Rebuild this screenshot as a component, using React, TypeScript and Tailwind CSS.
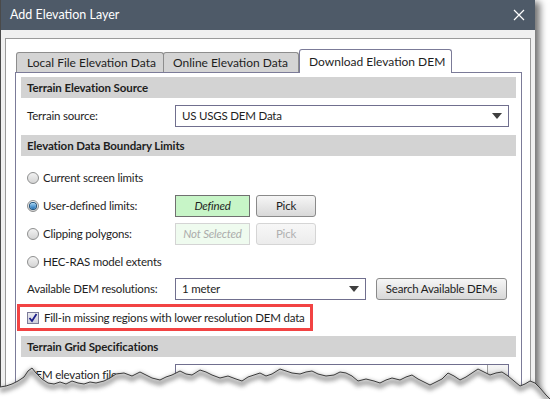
import React from 'react';

const font = { fontFamily: 'Lato, "Noto Sans", sans-serif' };

function Radio({ checked }: { checked?: boolean }) {
  return (
    <span className="relative inline-flex h-[12px] w-[12px] shrink-0 items-center justify-center rounded-full border border-[#8e8f8f] bg-gradient-to-b from-[#f2f2f2] to-[#d4d4d4]">
      {checked && (
        <span className="h-[6px] w-[6px] rounded-full bg-gradient-to-b from-[#9fd4f5] to-[#1a6fb5] ring-1 ring-[#1c4f7a]" />
      )}
    </span>
  );
}

function DropArrow() {
  return (
    <svg width="10" height="6" viewBox="0 0 10 6" className="shrink-0">
      <path d="M0 0 L10 0 L5 6 Z" fill="#3f3f3f" />
    </svg>
  );
}

function Header({ children }: { children: React.ReactNode }) {
  return (
    <div className="flex h-[21px] items-center bg-[#d3d3d3] pl-[6px] text-[11.5px] font-bold tracking-[-0.1px] text-[#1e1e1e]">
      {children}
    </div>
  );
}

function Button({ children, disabled, className = '' }: { children: React.ReactNode; disabled?: boolean; className?: string }) {
  return (
    <div
      className={
        'flex h-[22px] items-center justify-center rounded-[3px] border text-[11.5px] ' +
        (disabled
          ? 'border-[#d5d5d5] bg-gradient-to-b from-[#f7f7f7] to-[#ececec] text-[#b0b0b0] '
          : 'border-[#8a8a8a] bg-gradient-to-b from-[#f6f6f6] to-[#d8d8d8] text-[#1e1e1e] ') +
        className
      }
    >
      {children}
    </div>
  );
}

// torn paper edge at the bottom of the screenshot
const edge: [number, number][] = [
  [0, 387], [6, 386], [12, 384], [18, 381], [24, 377], [28, 371], [32, 368], [36, 373], [42, 379],
  [48, 383], [54, 384], [60, 382], [66, 384], [72, 381], [78, 383], [84, 384], [90, 382], [96, 383],
  [104, 381], [110, 378], [116, 374], [124, 373], [132, 376], [140, 372], [146, 375], [152, 378],
  [160, 380], [166, 377], [172, 375], [180, 371], [186, 374], [192, 375], [200, 370], [206, 372],
  [212, 375], [220, 378], [228, 376], [236, 379], [242, 381], [248, 377], [254, 375], [260, 373],
  [266, 376], [272, 374], [280, 369], [286, 371], [292, 373], [300, 374], [306, 372], [312, 371],
  [318, 374], [326, 376], [334, 375], [340, 372], [346, 373], [352, 376], [358, 381], [366, 379],
  [374, 381], [380, 383], [386, 380], [392, 378], [400, 380], [406, 377], [412, 375], [418, 379],
  [424, 382], [430, 385], [436, 382], [442, 379], [448, 373], [454, 376], [460, 380], [466, 377],
  [472, 373], [478, 369], [484, 372], [490, 375], [496, 373], [502, 372], [508, 376], [514, 381],
  [520, 386], [525, 384], [530, 381], [535, 383], [540, 388], [546, 395], [550, 399],
];
const edgeLine = edge.map((p, i) => (i === 0 ? 'M' : 'L') + p[0] + ' ' + p[1]).join(' ');
const edgeFill = edgeLine + ' L550 399 L0 399 Z';
const shadowLine = edge.map((p, i) => (i === 0 ? 'M' : 'L') + p[0] + ' ' + (p[1] + 3)).join(' ');

export default function App() {
  return (
    <div className="relative h-[399px] w-[550px] overflow-hidden bg-white" style={font}>
      {/* window */}
      <div className="flex h-[420px] w-[535px] flex-col border-l border-[#4a4a4a] shadow-[5px_2px_7px_rgba(0,0,0,0.55)]">
        {/* title bar */}
        <div className="flex h-[30px] shrink-0 items-center justify-between bg-[#4e5a68] pl-[9px] pr-[10px] text-white">
          <span className="text-[12.5px]">Add Elevation Layer</span>
          <svg width="12" height="12" viewBox="0 0 12 12">
            <path d="M1 1 L11 11 M11 1 L1 11" stroke="#ffffff" strokeWidth="1.2" />
          </svg>
        </div>

        {/* body */}
        <div className="flex flex-1 flex-col bg-[#f0f0f0] pl-[4px] pr-[4px] pt-[8px]">
          <div className="flex flex-1 flex-col border border-[#9a9a9a] bg-white pl-[9px] pr-[8px] pt-[10px]">
            {/* tabs */}
            <div className="relative z-10 flex h-[23px] items-end pl-[1px] text-[12px] text-[#1e1e1e]">
              <div className="flex h-[20px] w-[148px] items-center whitespace-nowrap rounded-t-[3px] border border-b-0 border-[#8d8d8d] bg-[#d4d4d4] pl-[10px]">
                Local File Elevation Data
              </div>
              <div className="-ml-px flex h-[20px] w-[136px] items-center whitespace-nowrap rounded-t-[3px] border border-b-0 border-[#8d8d8d] bg-[#d4d4d4] pl-[9px]">
                Online Elevation Data
              </div>
              <div className="-mb-px flex h-[24px] w-[153px] items-center whitespace-nowrap rounded-t-[3px] border border-b-0 border-[#7b7b98] bg-white pl-[9px]">
                Download Elevation DEM
              </div>
            </div>

            {/* tab content */}
            <div className="flex flex-1 flex-col border border-[#7b7b98] px-[5px] text-[11.5px] tracking-[-0.2px] text-[#1e1e1e]">
              <div className="mt-[4px]">
                <Header>Terrain Elevation Source</Header>
              </div>

              <div className="mt-[7px] flex h-[22px] items-center">
                <span className="w-[154px] whitespace-nowrap pl-[6px]">Terrain source:</span>
                <div className="flex h-[22px] w-[334px] items-center justify-between border border-[#706f8e] pl-[6px] pr-[6px]">
                  <span>US USGS DEM Data</span>
                  <DropArrow />
                </div>
              </div>

              <div className="mt-[8px]">
                <Header>Elevation Data Boundary Limits</Header>
              </div>

              <div className="mt-[8px] flex h-[28px] items-center pl-[6px]">
                <Radio />
                <span className="ml-[4px]">Current screen limits</span>
              </div>
              <div className="flex h-[28px] items-center pl-[6px]">
                <Radio checked />
                <span className="ml-[4px] w-[132px]">User-defined limits:</span>
                <div className="flex h-[22px] w-[75px] items-center justify-center border border-[#707070] bg-[#c7f5c7] italic">
                  Defined
                </div>
                <Button className="ml-[6px] w-[60px]">Pick</Button>
              </div>
              <div className="flex h-[28px] items-center pl-[6px]">
                <Radio />
                <span className="ml-[4px] w-[132px]">Clipping polygons:</span>
                <div className="flex h-[22px] w-[75px] items-center justify-center whitespace-nowrap border border-[#d4d4d4] bg-[#effbef] italic text-[#ababab]">
                  Not Selected
                </div>
                <Button disabled className="ml-[6px] w-[60px]">Pick</Button>
              </div>
              <div className="flex h-[28px] items-center pl-[6px]">
                <Radio />
                <span className="ml-[4px]">HEC-RAS model extents</span>
              </div>

              <div className="mt-[2px] flex h-[22px] items-center">
                <span className="w-[154px] whitespace-nowrap pl-[6px]">Available DEM resolutions:</span>
                <div className="flex h-[22px] w-[191px] items-center justify-between border border-[#706f8e] pl-[6px] pr-[6px]">
                  <span>1 meter</span>
                  <DropArrow />
                </div>
                <Button className="ml-[10px] w-[131px] whitespace-nowrap">Search Available DEMs</Button>
              </div>

              <div className="ml-[-4px] mt-[4px] flex h-[27px] w-[296px] items-center border-[3px] border-[#f24343] pl-[7px]">
                <span className="flex h-[12px] w-[12px] shrink-0 items-center justify-center border border-[#7c7c99] bg-gradient-to-b from-[#eaeaf0] to-[#cfd0dc]">
                  <svg width="10" height="10" viewBox="0 0 10 10">
                    <path d="M1.5 5 L4 8 L8.5 1" fill="none" stroke="#1b1f8a" strokeWidth="1.8" />
                  </svg>
                </span>
                <span className="ml-[5px] whitespace-nowrap">Fill-in missing regions with lower resolution DEM data</span>
              </div>

              <div className="mt-[5px]">
                <Header>Terrain Grid Specifications</Header>
              </div>

              <div className="mt-[7px] flex h-[22px] items-center">
                <span className="w-[154px] whitespace-nowrap pl-[6px]">DEM elevation file:</span>
                <div className="flex h-[22px] w-[334px] justify-end border border-[#706f8e]">
                  <div className="h-full w-[21px] border-l border-[#a0a0a0] bg-gradient-to-b from-[#f6f6f6] to-[#dadada]" />
                </div>
              </div>
            </div>
          </div>
        </div>
      </div>

      {/* torn edge */}
      <svg className="absolute left-0 top-0" width="550" height="399" viewBox="0 0 550 399">
        <defs>
          <filter id="blur" x="-5%" y="-50%" width="110%" height="200%">
            <feGaussianBlur stdDeviation="2" />
          </filter>
        </defs>
        <path d={edgeFill} fill="#ffffff" />
        <path d={shadowLine} fill="none" stroke="#5a5a5a" strokeWidth="5" opacity="0.55" filter="url(#blur)" />
        <path d={edgeLine} fill="none" stroke="#3a3a3a" strokeWidth="1" />
      </svg>
    </div>
  );
}
